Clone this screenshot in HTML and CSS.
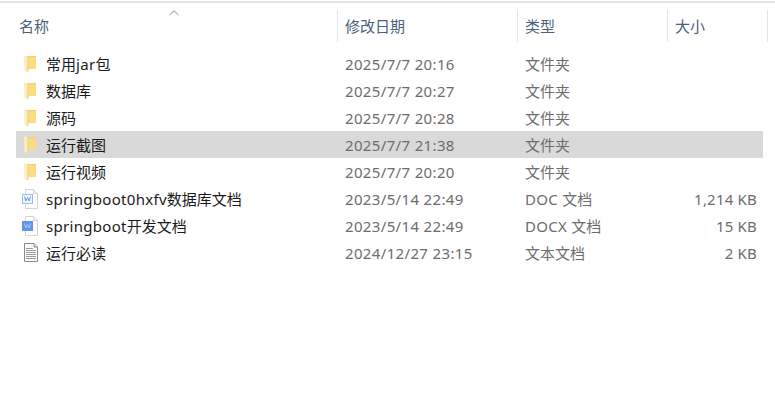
FILE: index.html
```html
<!DOCTYPE html>
<html lang="zh">
<head>
<meta charset="utf-8">
<title>文件列表</title>
<link rel="stylesheet" href="styles.css">
</head>
<body>
<svg class="defs" width="0" height="0" aria-hidden="true">
  <defs>
    <symbol id="folder" viewBox="0 0 17 20">
      <path d="M7 2 H15 V15 H7 Z" fill="#fbdc84"/>
      <path d="M7 2 H15 V3 H7 Z" fill="#f3cf6c"/>
      <path d="M3 1.500 L7.500 2 V15 L7 18.500 L3.500 17 Z" fill="#fdeeb8"/>
      <path d="M6.500 2 H7.500 V15 L7 18.500 H6.500 Z" fill="#ecca6e"/>
    </symbol>
    <symbol id="doc" viewBox="0 0 17 20">
      <path d="M4.500 .5 H12.500 L16.500 4.500 V19.500 H4.500 Z" fill="#fff" stroke="#d4d4d4"/>
      <path d="M12.500 .5 V4.500 H16.500" fill="#f3f3f3" stroke="#d4d4d4"/>
      <rect x="1.500" y="5.500" width="10" height="9" fill="#eef4fc" stroke="#9dbcee"/>
      <path d="M3.500 7.500 L4.800 12 L6.500 8.500 L8.200 12 L9.500 7.500" fill="none" stroke="#6b9de6"/>
    </symbol>
    <symbol id="docx" viewBox="0 0 17 20">
      <path d="M4.500 .5 H12.500 L16.500 4.500 V19.500 H4.500 Z" fill="#fff" stroke="#d4d4d4"/>
      <path d="M12.500 .5 V4.500 H16.500" fill="#f3f3f3" stroke="#d4d4d4"/>
      <rect x="1" y="5" width="11" height="10" fill="#5f96ea"/>
      <path d="M3.500 7.500 L4.800 12 L6.500 8.500 L8.200 12 L9.500 7.500" fill="none" stroke="#a9c8f4"/>
    </symbol>
    <symbol id="text" viewBox="0 0 17 20">
      <path d="M3.500 .5 H13 L16.500 4 V18.500 H3.500 Z" fill="#fbfbfb" stroke="#8c8c8c"/>
      <path d="M13 .5 V4 H16.500" fill="#e4e4e4" stroke="#8c8c8c"/>
      <path d="M5 5.500 H12 M5 7.500 H15 M5 9.500 H15 M5 11.500 H15 M5 13.500 H15 M5 15.500 H15" stroke="#9a9a9a"/>
    </symbol>
  </defs>
</svg>
<main class="explorer">
  <div class="header">
    <div class="head-cell">名称<svg class="sort" width="10" height="6" viewBox="0 0 10 6"><path d="M.5 5 L5 .8 L9.500 5" fill="none" stroke="#8c8c8c"/></svg></div>
    <div class="head-cell">修改日期</div>
    <div class="head-cell">类型</div>
    <div class="head-cell">大小</div>
  </div>
  <div class="rows">
    <div class="row"><span class="name"><svg class="icon"><use href="#folder"/></svg><span>常用<span class="latin">jar</span>包</span></span><span class="date">2025/7/7 20:16</span><span class="type">文件夹</span><span class="size"></span></div>
    <div class="row"><span class="name"><svg class="icon"><use href="#folder"/></svg><span>数据库</span></span><span class="date">2025/7/7 20:27</span><span class="type">文件夹</span><span class="size"></span></div>
    <div class="row"><span class="name"><svg class="icon"><use href="#folder"/></svg><span>源码</span></span><span class="date">2025/7/7 20:28</span><span class="type">文件夹</span><span class="size"></span></div>
    <div class="row selected"><span class="name"><svg class="icon"><use href="#folder"/></svg><span>运行截图</span></span><span class="date">2025/7/7 21:38</span><span class="type">文件夹</span><span class="size"></span></div>
    <div class="row"><span class="name"><svg class="icon"><use href="#folder"/></svg><span>运行视频</span></span><span class="date">2025/7/7 20:20</span><span class="type">文件夹</span><span class="size"></span></div>
    <div class="row"><span class="name"><svg class="icon"><use href="#doc"/></svg><span><span class="latin">springboot0hxfv</span>数据库文档</span></span><span class="date">2023/5/14 22:49</span><span class="type"><span class="latin">DOC </span>文档</span><span class="size">1,214 KB</span></div>
    <div class="row"><span class="name"><svg class="icon"><use href="#docx"/></svg><span><span class="latin">springboot</span>开发文档</span></span><span class="date">2023/5/14 22:49</span><span class="type"><span class="latin">DOCX </span>文档</span><span class="size">15 KB</span></div>
    <div class="row"><span class="name"><svg class="icon"><use href="#text"/></svg><span>运行必读</span></span><span class="date">2024/12/27 23:15</span><span class="type">文本文档</span><span class="size">2 KB</span></div>
  </div>
</main>
</body>
</html>
```
FILE: styles.css
```css
* { box-sizing: border-box; }
html, body { margin: 0; height: 100%; background: #fff; }
body {
  font-family: "Noto Sans", "Noto Sans CJK SC", sans-serif;
  font-size: 15px;
  overflow: hidden;
}
.defs { position: absolute; }
.latin { letter-spacing: .3px; }
.explorer {
  border-top: 2px solid #e3e3e3;
  margin-top: 1px;
  padding-top: 7px;
}
.header {
  display: grid;
  grid-template-columns: 338px 180px 150px 100px;
  height: 32px;
}
.head-cell {
  position: relative;
  display: flex;
  align-items: center;
  padding-left: 7px;
  color: #4c607a;
  border-right: 1px solid #e5e5e5;
  line-height: 32px;
}
.head-cell:first-child { padding-left: 19px; }
.sort { position: absolute; left: 169px; top: 0; }
.rows { margin: 8px 12px 0 16px; }
.row {
  display: grid;
  grid-template-columns: 322px 180px 150px 90px;
  height: 27px;
  align-items: center;
  color: #6d6d6d;
}
.row.selected { background: #d9d9d9; }
.name {
  display: flex;
  align-items: center;
  color: #1a1a1a;
  white-space: nowrap;
}
.icon {
  width: 17px;
  height: 20px;
  margin: 0 8px 0 5px;
  flex: none;
}
.date { padding-left: 7px; letter-spacing: .35px; }
.type { padding-left: 7px; }
.size { text-align: right; padding-right: 1px; letter-spacing: .2px; }
```
